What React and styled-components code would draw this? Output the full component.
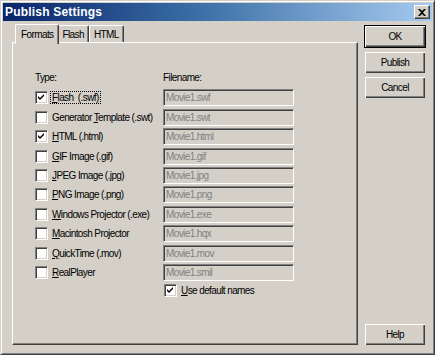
import React from "react";
import styled, { createGlobalStyle } from "styled-components";

const GlobalStyle = createGlobalStyle`
  html, body {
    margin: 0;
    padding: 0;
    background: #d4d0c8;
  }
  body {
    font-family: "Liberation Sans", Arial, sans-serif;
    font-size: 10px;
    letter-spacing: -0.6px;
    color: #000;
  }
`;

const formats = [
  { key: "F", rest: "lash  (.swf)", file: "Movie1.swf", checked: true, focus: true },
  { pre: "Generator ", key: "T", rest: "emplate (.swt)", file: "Movie1.swt" },
  { key: "H", rest: "TML (.html)", file: "Movie1.html", checked: true },
  { key: "G", rest: "IF Image (.gif)", file: "Movie1.gif" },
  { key: "J", rest: "PEG Image (.jpg)", file: "Movie1.jpg" },
  { key: "P", rest: "NG Image (.png)", file: "Movie1.png" },
  { key: "W", rest: "indows Projector (.exe)", file: "Movie1.exe" },
  { key: "M", rest: "acintosh Projector", file: "Movie1.hqx" },
  { key: "Q", rest: "uickTime (.mov)", file: "Movie1.mov" },
  { key: "R", rest: "ealPlayer", file: "Movie1.smil" },
];

const CheckMark = () => (
  <svg width="7" height="7" viewBox="0 0 7 7">
    <path d="M0 2 L2 4 L6 0 L6 2 L2 6 L0 4 Z" fill="#000" />
  </svg>
);

const CheckBox = ({ checked }) => (
  <Box>{checked && <CheckMark />}</Box>
);

const CloseIcon = () => (
  <svg width="8" height="7" viewBox="0 0 8 7">
    <path d="M0 0h2l2 2 2-2h2L5 3.5 8 7H6L4 5 2 7H0l3-3.5z" fill="#000" />
  </svg>
);

const App = () => {
  return (
    <Window>
      <GlobalStyle />
      <TitleBar>
        <span>Publish Settings</span>
        <CloseButton>
          <CloseIcon />
        </CloseButton>
      </TitleBar>

      <Body>
        <Left>
          <TabStrip>
            <Tab $active>Formats</Tab>
            <Tab>Flash</Tab>
            <Tab>HTML</Tab>
          </TabStrip>
          <Panel>
            <Grid>
              <Heading>Type:</Heading>
              <Heading>Filename:</Heading>
              {formats.map((f) => (
                <React.Fragment key={f.file}>
                  <Option>
                    <CheckBox checked={f.checked} />
                    <Label $focus={f.focus}>
                      {f.pre}
                      <u>{f.key}</u>
                      {f.rest}
                    </Label>
                  </Option>
                  <Field>{f.file}</Field>
                </React.Fragment>
              ))}
              <span />
              <Option $tight>
                <CheckBox checked />
                <Label>
                  <u>U</u>se default names
                </Label>
              </Option>
            </Grid>
          </Panel>
        </Left>

        <Buttons>
          <Button $default>OK</Button>
          <Button>Publish</Button>
          <Button>Cancel</Button>
          <Spacer />
          <Button>Help</Button>
        </Buttons>
      </Body>
    </Window>
  );
};

const Window = styled.div`
  width: 435px;
  height: 355px;
  box-sizing: border-box;
  background: #d4d0c8;
  border-top: 1px solid #d4d0c8;
  border-left: 1px solid #d4d0c8;
  border-right: 1px solid #404040;
  border-bottom: 1px solid #404040;
  box-shadow: inset 1px 1px 0 #fff, inset -1px -1px 0 #808080;
  padding: 2px;
  display: flex;
  flex-direction: column;
`;

const TitleBar = styled.div`
  height: 18px;
  flex: none;
  display: flex;
  align-items: center;
  justify-content: space-between;
  padding: 0 2px 0 2px;
  background: linear-gradient(to right, #0a246a, #3a6ea5 45%, #a6caf0);
  color: #fff;
  font-weight: bold;
  font-size: 12px;
  letter-spacing: 0.2px;
`;

const CloseButton = styled.div`
  width: 16px;
  height: 14px;
  box-sizing: border-box;
  background: #d4d0c8;
  border-top: 1px solid #fff;
  border-left: 1px solid #fff;
  border-right: 1px solid #404040;
  border-bottom: 1px solid #404040;
  box-shadow: inset -1px -1px 0 #808080;
  display: flex;
  align-items: center;
  justify-content: center;
`;

const Body = styled.div`
  flex: 1;
  display: flex;
  gap: 6px;
  padding: 3px 6px 7px 9px;
`;

const Left = styled.div`
  width: 346px;
  display: flex;
  flex-direction: column;
`;

const TabStrip = styled.div`
  display: flex;
  align-items: flex-end;
  height: 20px;
  padding-left: 5px;
  position: relative;
  z-index: 1;
  margin-bottom: -2px;
`;

const Tab = styled.div`
  box-sizing: border-box;
  height: ${(p) => (p.$active ? "20px" : "17px")};
  padding: ${(p) => (p.$active ? "3px 5px 0" : "2px 4px 0")};
  margin: ${(p) => (p.$active ? "0 -2px 0 -2px" : "0 0 2px")};
  background: #d4d0c8;
  border-top: 1px solid #fff;
  border-left: 1px solid #fff;
  border-right: 1px solid #404040;
  border-top-left-radius: 2px;
  border-top-right-radius: 2px;
  box-shadow: inset -1px 0 0 #808080;
  position: relative;
  z-index: ${(p) => (p.$active ? 2 : 0)};
  line-height: 13px;
`;

const Panel = styled.div`
  flex: 1;
  box-sizing: border-box;
  border-top: 1px solid #fff;
  border-left: 1px solid #fff;
  border-right: 1px solid #404040;
  border-bottom: 1px solid #404040;
  box-shadow: inset -1px -1px 0 #808080;
  padding: 29px 0 0 22px;
`;

const Grid = styled.div`
  display: grid;
  grid-template-columns: 128px 131px;
  grid-auto-rows: 19.45px;
  grid-template-rows: 16px;
  align-items: center;
`;

const Heading = styled.div`
  align-self: start;
`;

const Option = styled.div`
  display: flex;
  align-items: center;
  gap: 3px;
  margin-left: ${(p) => (p.$tight ? "1px" : "0")};
  margin-top: ${(p) => (p.$tight ? "-4px" : "0")};
`;

const Box = styled.span`
  width: 13px;
  height: 13px;
  flex: none;
  box-sizing: border-box;
  background: #fff;
  border-top: 1px solid #808080;
  border-left: 1px solid #808080;
  border-right: 1px solid #fff;
  border-bottom: 1px solid #fff;
  box-shadow: inset 1px 1px 0 #404040, inset -1px -1px 0 #d4d0c8;
  display: flex;
  align-items: center;
  justify-content: center;
`;

const Label = styled.span`
  white-space: pre;
  padding: 0 1px;
  outline: ${(p) => (p.$focus ? "1px dotted #000" : "none")};
`;

const Field = styled.div`
  box-sizing: border-box;
  height: 17px;
  padding: 1px 2px 0;
  color: #808080;
  background: #d4d0c8;
  border-top: 1px solid #808080;
  border-left: 1px solid #808080;
  border-right: 1px solid #fff;
  border-bottom: 1px solid #fff;
  box-shadow: inset 1px 1px 0 #404040, inset -1px -1px 0 #d4d0c8;
  line-height: 13px;
`;

const Buttons = styled.div`
  width: 62px;
  display: flex;
  flex-direction: column;
  align-items: center;
  gap: 4px;
  padding-top: 1px;
`;

const Spacer = styled.div`
  flex: 1;
`;

const Button = styled.div`
  box-sizing: border-box;
  width: ${(p) => (p.$default ? "62px" : "60px")};
  height: ${(p) => (p.$default ? "23px" : "21px")};
  display: flex;
  align-items: center;
  justify-content: center;
  background: #d4d0c8;
  border: ${(p) => (p.$default ? "1px solid #000" : "none")};
  box-shadow: inset 1px 1px 0 #fff, inset -1px -1px 0 #404040,
    inset -2px -2px 0 #808080;
`;

export default App;
